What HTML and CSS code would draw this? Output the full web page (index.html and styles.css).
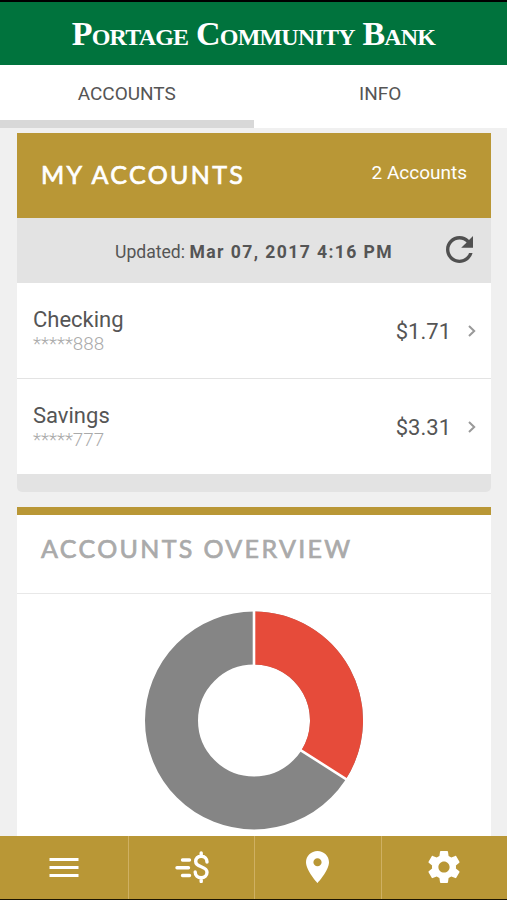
FILE: index.html
```
<!DOCTYPE html>
<html lang="en">
<head>
    <meta charset="UTF-8">
    <meta name="viewport" content="width=device-width, initial-scale=1.0">
    <title>Portage Community Bank</title>
    <link rel="stylesheet" href="styles.css">
</head>
<body>
    <div class="app">
        <header class="header">
            <h1 class="logo">Portage Community Bank</h1>
        </header>

        <nav class="tabs">
            <a class="tab active">ACCOUNTS</a>
            <a class="tab">INFO</a>
        </nav>

        <main class="content">
            <section class="accounts">
                <div class="accounts-header">
                    <h2>MY ACCOUNTS</h2>
                    <span class="count">2 Accounts</span>
                </div>
                <div class="updated">
                    <span class="updated-text">Updated: <strong>Mar 07, 2017 4:16 PM</strong></span>
                    <svg class="refresh" viewBox="4 4 16 16">
                        <path d="M17.65 6.35C16.2 4.9 14.21 4 12 4c-4.42 0-7.99 3.58-7.99 8s3.57 8 7.99 8c3.73 0 6.84-2.55 7.73-6h-2.08c-.82 2.33-3.04 4-5.65 4-3.31 0-6-2.69-6-6s2.69-6 6-6c1.66 0 3.14.69 4.22 1.78L13 11h7V4l-2.35 2.35z"/>
                    </svg>
                </div>
                <div class="account">
                    <div class="account-info">
                        <div class="name">Checking</div>
                        <div class="number">*****888</div>
                    </div>
                    <span class="balance">$1.71</span>
                    <svg class="chevron" viewBox="0 0 8 12"><path d="M1 1l5.2 5L1 11"/></svg>
                </div>
                <div class="account">
                    <div class="account-info">
                        <div class="name">Savings</div>
                        <div class="number">*****777</div>
                    </div>
                    <span class="balance">$3.31</span>
                    <svg class="chevron" viewBox="0 0 8 12"><path d="M1 1l5.2 5L1 11"/></svg>
                </div>
                <div class="accounts-footer"></div>
            </section>

            <section class="overview">
                <h2>ACCOUNTS OVERVIEW</h2>
                <svg class="chart" viewBox="-110 -109.5 220 220">
                    <circle class="slice savings" r="82.5"/>
                    <path class="slice checking" d="M0 -82.5A82.5 82.5 0 0 1 69.6 44.3"/>
                    <path class="divider" d="M0 -50V-110M42.2 26.9L94 59.8"/>
                </svg>
            </section>
        </main>

        <nav class="bottom-nav">
            <a class="nav-item">
                <svg width="30" height="32" viewBox="0 0 30 32">
                    <path class="line" d="M.5 8.5H29.5M.5 16.5H29.5M.5 24.5H29.5"/>
                </svg>
            </a>
            <a class="nav-item">
                <svg width="34" height="32" viewBox="0 0 34 32">
                    <path class="line speed" d="M7.5 9H14.5M2 16.8H13.5M7.5 24.5H14.5"/>
                    <path class="line dollar" d="M32 11C32 7.5 29.8 5.3 26.2 5.3S20.7 7.5 20.7 10.5C20.7 17 32 14.5 32 21.3C32 24.6 29.5 26.8 26.2 26.8S20.2 24.6 20.2 21M26.2 2V5M26.2 27V30.5"/>
                </svg>
            </a>
            <a class="nav-item">
                <svg width="23" height="32" viewBox="5 2 14 20" preserveAspectRatio="none">
                    <path d="M12 2C8.13 2 5 5.13 5 9c0 5.25 7 13 7 13s7-7.75 7-13c0-3.87-3.13-7-7-7zm0 9.5c-1.38 0-2.5-1.12-2.5-2.5s1.12-2.5 2.5-2.5 2.5 1.12 2.5 2.5-1.12 2.5-2.5 2.5z"/>
                </svg>
            </a>
            <a class="nav-item">
                <svg width="32" height="32" viewBox="2 2 20 20">
                    <path d="M19.43 12.98c.04-.32.07-.64.07-.98s-.03-.66-.07-.98l2.11-1.65c.19-.15.24-.42.12-.64l-2-3.46c-.12-.22-.39-.3-.61-.22l-2.49 1c-.52-.4-1.08-.73-1.69-.98l-.38-2.65C14.46 2.18 14.25 2 14 2h-4c-.25 0-.46.18-.49.42l-.38 2.65c-.61.25-1.17.59-1.69.98l-2.49-1c-.23-.09-.49 0-.61.22l-2 3.46c-.13.22-.07.49.12.64l2.11 1.65c-.04.32-.07.65-.07.98s.03.66.07.98l-2.11 1.65c-.19.15-.24.42-.12.64l2 3.46c.12.22.39.3.61.22l2.49-1c.52.4 1.08.73 1.69.98l.38 2.65c.03.24.24.42.49.42h4c.25 0 .46-.18.49-.42l.38-2.65c.61-.25 1.17-.59 1.69-.98l2.49 1c.23.09.49 0 .61-.22l2-3.46c.12-.22.07-.49-.12-.64l-2.11-1.65zM12 15.5c-1.93 0-3.5-1.57-3.5-3.5s1.57-3.5 3.5-3.5 3.5 1.57 3.5 3.5-1.57 3.5-3.5 3.5z"/>
                </svg>
            </a>
        </nav>
    </div>
</body>
</html>
```
FILE: styles.css
```
* {
    box-sizing: border-box;
}
body {
    margin: 0;
    background: #f0f0f0;
    color: #555;
    font-family: Roboto, sans-serif;
}
h1, h2 {
    margin: 0;
}
.app {
    display: flex;
    flex-direction: column;
    height: 900px;
    overflow: hidden;
    border-top: 2px solid #000;
    border-bottom: 1px solid #1c1400;
}
.header {
    height: 63px;
    flex: none;
    display: flex;
    align-items: center;
    justify-content: center;
    background: #00733d;
}
.logo {
    color: #fff;
    font-family: "Liberation Serif", serif;
    font-size: 34px;
    line-height: 40px;
    font-variant: small-caps;
    white-space: nowrap;
    letter-spacing: -0.8px;
}
.tabs {
    display: flex;
    flex: none;
    height: 63px;
    background: #fff;
}
.tab {
    flex: 1;
    text-align: center;
    font-size: 19px;
    line-height: 57px;
    border-bottom: 8px solid transparent;
}
.tab.active {
    border-bottom-color: #d8d8d8;
}
.content {
    flex: 1;
    min-height: 0;
    overflow: hidden;
    padding: 5px 16px 0 17px;
}
.accounts-header {
    display: flex;
    justify-content: space-between;
    height: 85px;
    padding: 0 24px;
    background: #b99736;
    color: #fff;
}
.accounts-header h2,
.overview h2 {
    font-family: Lato, sans-serif;
    font-size: 25px;
    font-weight: 400;
    letter-spacing: 2.35px;
    white-space: nowrap;
    -webkit-text-stroke: 0.7px;
}
.accounts-header h2 {
    line-height: 82px;
}
.count {
    font-size: 19px;
    line-height: 79px;
}
.updated {
    display: flex;
    align-items: center;
    height: 65px;
    padding: 0 18px 0 98px;
    background: #e3e3e3;
    font-size: 17.6px;
}
.updated-text {
    flex: 1;
    padding-top: 2px;
    white-space: nowrap;
}
.updated strong {
    letter-spacing: 1.4px;
}
.refresh {
    width: 27px;
    height: 27px;
    margin-bottom: 2px;
    fill: #505050;
}
.account {
    display: flex;
    align-items: center;
    height: 96px;
    padding: 0 15px 0 16px;
    background: #fff;
    border-bottom: 1px solid #e3e3e3;
}
.account-info {
    flex: 1;
    padding-top: 1px;
}
.name {
    font-size: 22px;
    line-height: 26px;
}
.number {
    color: #aaa;
    font-size: 18.8px;
    font-weight: 300;
    line-height: 23px;
}
.balance {
    padding-top: 1px;
    font-size: 22px;
}
.chevron {
    width: 8px;
    height: 12px;
    margin-left: 17px;
    fill: none;
    stroke: #999;
    stroke-width: 2;
}
.accounts-footer {
    height: 17px;
    background: #e3e3e3;
    border-radius: 0 0 5px 5px;
}
.overview {
    height: 340px;
    margin-top: 15px;
    background: #fff;
    border-top: 8px solid #b99736;
}
.overview h2 {
    height: 79px;
    padding-left: 24px;
    line-height: 67px;
    color: #aaa;
    border-bottom: 1px solid #e8e8e8;
}
.chart {
    display: block;
    width: 220px;
    height: 220px;
    margin: 17px auto 0;
}
.slice {
    fill: none;
    stroke-width: 53;
}
.savings {
    stroke: #858585;
}
.checking {
    stroke: #e64b3a;
}
.divider {
    stroke: #fff;
    stroke-width: 2.6;
}
.bottom-nav {
    display: flex;
    flex: none;
    height: 63px;
    background: #b99736;
}
.nav-item {
    flex: 1;
    display: flex;
    align-items: center;
    justify-content: center;
    padding-bottom: 2px;
    border-right: 1px solid #cfb062;
}
.nav-item:first-child {
    flex: 0 0 129px;
}
.nav-item:last-child {
    border-right: none;
}
.nav-item svg {
    fill: #fff;
}
.nav-item .line {
    fill: none;
    stroke: #fff;
    stroke-width: 3;
}
.nav-item .speed,
.nav-item .dollar {
    stroke-width: 3.4;
    stroke-linecap: round;
}
```
